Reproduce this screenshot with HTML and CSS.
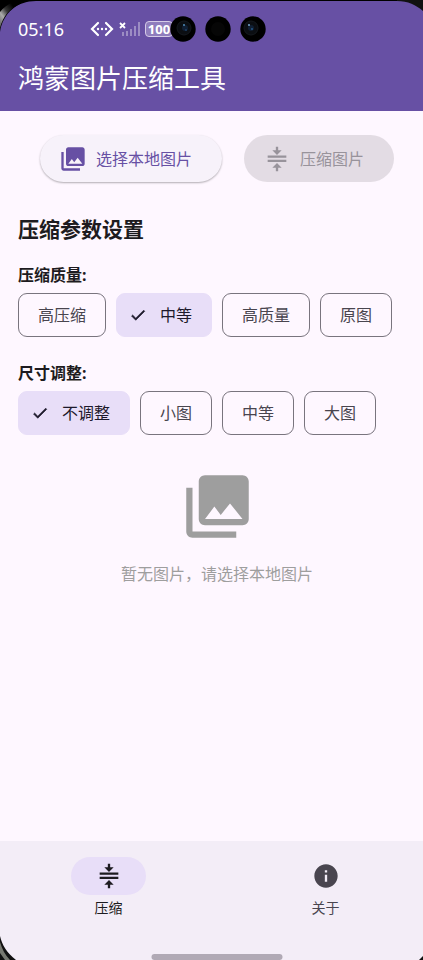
FILE: index.html
```html
<!DOCTYPE html>
<html lang="zh-CN">
<head>
<meta charset="utf-8">
<meta name="viewport" content="width=device-width, initial-scale=1">
<title>鸿蒙图片压缩工具</title>
<link rel="stylesheet" href="styles.css">
</head>
<body>
<svg class="symbols" aria-hidden="true">
  <symbol id="collections" viewBox="0 0 24 24"><path d="M22 16V4c0-1.100-.9-2-2-2H8c-1.100 0-2 .9-2 2v12c0 1.100.9 2 2 2h12c1.100 0 2-.9 2-2zm-11-4l2.030 2.710L16 11l4 5H8l3-4zM2 6v14c0 1.100.9 2 2 2h14v-2H4V6H2z"/></symbol>
  <symbol id="compress" viewBox="0 0 24 24"><path d="M8 19.500h3v3h2v-3h3l-4-4-4 4zM16 4.500h-3v-3h-2v3H8l4 4 4-4zM4 9v2h16V9H4zM4 12.600v2h16v-2H4z"/></symbol>
  <symbol id="check" viewBox="0 0 24 24"><path d="M9 16.170L4.830 12l-1.420 1.410L9 19 21 7l-1.410-1.410z" stroke="currentColor" stroke-width=".8"/></symbol>
  <symbol id="info" viewBox="0 0 24 24"><path d="M12 2C6.480 2 2 6.480 2 12s4.480 10 10 10 10-4.480 10-10S17.520 2 12 2zm1 15h-2v-6h2v6zm0-8h-2V7h2v2z"/></symbol>
</svg>
<div class="screen">
  <header class="app-bar">
    <div class="status">
      <span class="clock">05:16</span>
      <svg class="usb" viewBox="0 0 24 16" aria-hidden="true">
        <path d="M8 2L2 8l6 6M16 2l6 6-6 6" fill="none" stroke="currentColor" stroke-width="2.200" stroke-linecap="round"/>
        <circle cx="8" cy="8" r="1.200"/><circle cx="12" cy="8" r="1.200"/><circle cx="16" cy="8" r="1.200"/>
      </svg>
      <svg class="signal" viewBox="0 0 22 16" aria-hidden="true">
        <path d="M1 2l5 5M6 2L1 7" stroke="currentColor" stroke-width="1.800"/>
        <path class="bars" d="M3 11h2v4H3zM7 10h2v5H7zM11 8h2v7h-2zM15 5h2v10h-2zM19 1h2v14h-2z"/>
      </svg>
      <span class="battery">100</span>
      <svg class="cameras" viewBox="0 0 96 26" aria-hidden="true">
        <circle cx="13" cy="13" r="12.700" fill="#000"/><circle cx="48" cy="13" r="12.700" fill="#000"/><circle cx="83" cy="13" r="12.700" fill="#000"/>
        <circle cx="14" cy="12" r="7" fill="#0b0e12" stroke="#15191e"/><circle cx="48" cy="13" r="7" fill="#060606"/><circle cx="81" cy="12" r="7" fill="#0b0e12" stroke="#15191e"/>
        <circle cx="15" cy="12" r="3" fill="#101f33"/><circle cx="81" cy="12" r="3" fill="#101f33"/>
        <circle cx="14" cy="9" r="1" fill="#4f8dbb"/><circle cx="79" cy="9" r="1" fill="#79a9d0"/><circle cx="82" cy="13" r="1" fill="#24598a"/><circle cx="16" cy="14" r="1" fill="#1c3f65"/>
      </svg>
    </div>
    <h1>鸿蒙图片压缩工具</h1>
  </header>

  <main>
    <div class="actions">
      <button class="action pick" type="button"><svg class="icon"><use href="#collections"/></svg>选择本地图片</button>
      <button class="action" type="button" disabled><svg class="icon"><use href="#compress"/></svg>压缩图片</button>
    </div>

    <h2>压缩参数设置</h2>
    <fieldset>
      <legend>压缩质量:</legend>
      <div class="chips">
        <label class="chip"><input type="radio" name="quality">高压缩</label>
        <label class="chip selected"><input type="radio" name="quality" checked><svg class="tick"><use href="#check"/></svg>中等</label>
        <label class="chip"><input type="radio" name="quality">高质量</label>
        <label class="chip"><input type="radio" name="quality">原图</label>
      </div>
    </fieldset>
    <fieldset>
      <legend>尺寸调整:</legend>
      <div class="chips">
        <label class="chip selected"><input type="radio" name="size" checked><svg class="tick"><use href="#check"/></svg>不调整</label>
        <label class="chip"><input type="radio" name="size">小图</label>
        <label class="chip"><input type="radio" name="size">中等</label>
        <label class="chip"><input type="radio" name="size">大图</label>
      </div>
    </fieldset>

    <section class="empty">
      <svg class="empty-icon" aria-hidden="true"><use href="#collections"/></svg>
      <p>暂无图片，请选择本地图片</p>
    </section>
  </main>

  <nav>
    <a class="tab current" href="#"><span class="pill"><svg class="icon"><use href="#compress"/></svg></span>压缩</a>
    <a class="tab" href="#"><span class="pill"><svg class="icon"><use href="#info"/></svg></span>关于</a>
    <span class="home-bar"></span>
  </nav>
</div>
<svg class="corner top-left" viewBox="0 0 36 36" aria-hidden="true">
  <defs><linearGradient id="rim" x1="0" y1="1" x2="1" y2="0"><stop offset="0" stop-color="#555"/><stop offset=".3" stop-color="#aaa"/><stop offset=".5" stop-color="#333"/><stop offset=".75" stop-color="#000"/></linearGradient></defs>
  <path d="M0 0H36V1C17 1 3 13 0 32z" fill="#000"/>
  <path d="M0 12C3 8 8 4 14 2L20 4C10 8 3 16 0 28z" fill="url(#rim)"/>
</svg>
<svg class="corner top-right" viewBox="0 0 26 12" aria-hidden="true"><path d="M0 0H26V11C19 5 11 1 0 1z"/></svg>
<svg class="corner bottom-left" viewBox="0 0 16 24" aria-hidden="true"><path d="M0 0C2 9 7 17 16 24H0z"/><path d="M0 6C2 13 5 19 10 24H5L0 17z" fill="#777971"/></svg>
<svg class="corner bottom-right" viewBox="0 0 4 4" aria-hidden="true"><path d="M4 0V4H0z"/></svg>
</body>
</html>
```

FILE: styles.css
```css
* {
  box-sizing: border-box;
}

body {
  position: relative;
  margin: 0;
  overflow: hidden;
  background: #fef7ff;
  color: #1d1b20;
  font-family: "Noto Sans", "Noto Sans CJK SC", sans-serif;
  font-size: 16px;
  line-height: 24px;
}

svg {
  display: block;
  flex: none;
  fill: currentColor;
}

.symbols {
  position: absolute;
  width: 0;
  height: 0;
}

/* The display is slightly wider than the visible window. */
.screen {
  display: flex;
  flex-direction: column;
  width: calc(100% + 11px);
  min-height: 100vh;
}

.app-bar {
  padding: 15px 18px;
  border-top: 1px solid #000;
  background: #6750a4;
  color: #fff;
}

.status {
  display: flex;
  align-items: center;
  height: 26px;
}

.clock {
  width: 72px;
  font-size: 18px;
}

.usb {
  width: 24px;
  height: 16px;
}

.signal {
  width: 22px;
  height: 16px;
  margin: 0 4px 0 5px;
}

.bars {
  opacity: 0.35;
}

.battery {
  width: 28px;
  height: 16px;
  border: 1px solid #d5cbe7;
  border-radius: 4px;
  background: #8f7dbd;
  font-size: 13px;
  font-weight: 700;
  line-height: 14px;
  text-align: center;
}

.cameras {
  width: 96px;
  height: 26px;
  margin-left: -3px;
}

h1 {
  margin: 18px 0 0;
  font-size: 26px;
  font-weight: 400;
  line-height: 36px;
}

main {
  flex: 1;
  padding: 24px 18px;
}

.actions {
  display: flex;
  justify-content: center;
  gap: 22px;
}

.action {
  display: flex;
  align-items: center;
  gap: 9px;
  height: 47px;
  padding: 0 30px 0 19px;
  border: 0;
  border-radius: 24px;
  background: #e3dce4;
  color: #98939b;
  font: inherit;
}

.pick {
  background: #f7f2fa;
  color: #6750a4;
  box-shadow: 0 1px 2px rgba(0, 0, 0, 0.3);
}

.icon {
  width: 28px;
  height: 28px;
}

h2 {
  margin: 32px 0 19px;
  font-size: 21px;
  font-weight: 700;
  line-height: 30px;
}

fieldset {
  min-width: 0;
  margin: 0 0 24px;
  padding: 0;
  border: 0;
}

legend {
  padding: 0;
  margin-bottom: 6px;
  font-weight: 700;
}

.chips {
  display: flex;
  gap: 10px;
}

.chip {
  position: relative;
  display: flex;
  align-items: center;
  height: 44px;
  padding: 0 19px;
  border: 1px solid #79747e;
  border-radius: 9px;
  color: #49454f;
  white-space: nowrap;
}

.chip input {
  position: absolute;
  inset: 0;
  margin: 0;
  opacity: 0;
}

.selected {
  gap: 13px;
  padding-left: 12px;
  border-color: #e8def8;
  background: #e8def8;
  color: #1d192b;
}

.tick {
  width: 18px;
  height: 18px;
}

.empty {
  display: flex;
  flex-direction: column;
  align-items: center;
  gap: 18px;
  margin-top: 34px;
  color: #9e9e9e;
}

.empty-icon {
  width: 75px;
  height: 75px;
}

.empty p {
  margin: 0;
}

nav {
  position: relative;
  display: flex;
  height: 119px;
  padding-top: 16px;
  background: #f3edf7;
}

.tab {
  display: flex;
  flex: 1;
  flex-direction: column;
  align-items: center;
  gap: 3px;
  color: #49454f;
  font-size: 14px;
  line-height: 20px;
  text-decoration: none;
}

.pill {
  display: flex;
  align-items: center;
  justify-content: center;
  width: 75px;
  height: 38px;
  border-radius: 19px;
}

.current {
  color: #1d1b20;
}

.current .pill {
  background: #e8def8;
}

.home-bar {
  position: absolute;
  bottom: 0;
  left: 50%;
  width: 131px;
  height: 6px;
  border-radius: 3px;
  background: #b0a9b5;
  transform: translateX(-50%);
}

.corner {
  position: absolute;
  fill: #111;
}

.top-left {
  top: 0;
  left: 0;
  width: 36px;
  height: 36px;
}

.top-right {
  top: 0;
  right: 0;
  width: 26px;
  height: 12px;
}

.bottom-left {
  bottom: 0;
  left: 0;
  width: 16px;
  height: 24px;
}

.bottom-right {
  right: 0;
  bottom: 0;
  width: 4px;
  height: 4px;
}
```
